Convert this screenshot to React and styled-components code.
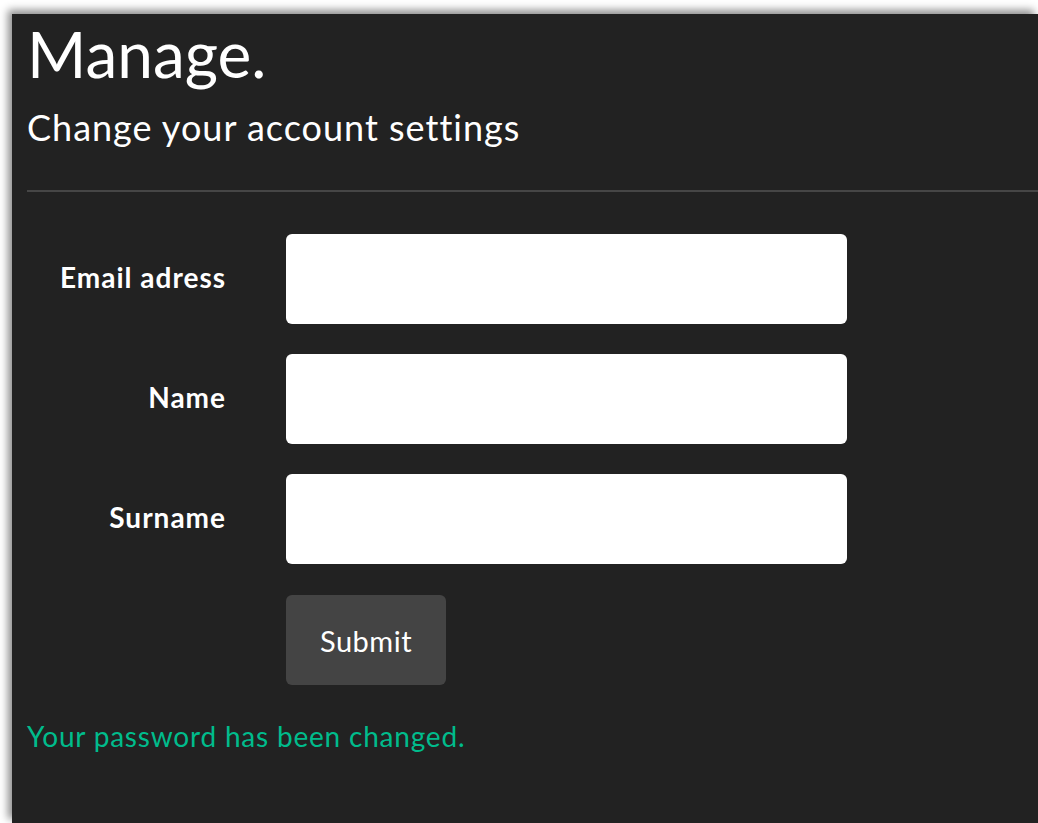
import React from "react";
import styled, { createGlobalStyle } from "styled-components";

const GlobalStyle = createGlobalStyle`
  html, body {
    margin: 0;
    padding: 0;
    background: #fff;
    overflow: hidden;
  }
  body {
    font-family: Lato, "Open Sans", sans-serif;
  }
`;

const Page = styled.div`
  padding: 14px 0 0 12px;
  height: 823px;
  box-sizing: border-box;
`;

const Panel = styled.div`
  background: #222;
  color: #fff;
  height: 100%;
  padding: 0 0 0 15px;
  box-shadow: -4px -4px 8px rgba(0, 0, 0, 0.45);
`;

const Title = styled.h1`
  margin: 0;
  padding-top: 2px;
  font-size: 64px;
  font-weight: 400;
  line-height: 76px;
`;

const Subtitle = styled.h4`
  margin: 14px 0 0;
  font-size: 36px;
  font-weight: 400;
  letter-spacing: 1px;
  line-height: 42px;
`;

const Divider = styled.hr`
  border: 0;
  border-top: 2px solid #464646;
  margin: 42px 0 0;
`;

const Form = styled.form`
  display: grid;
  grid-template-columns: 199px 561px;
  column-gap: 60px;
  row-gap: 30px;
  margin-top: 42px;
  align-items: center;
`;

const Label = styled.label`
  text-align: right;
  font-size: 28px;
  font-weight: 700;
  letter-spacing: 1px;
  padding-bottom: 5px;
`;

const Input = styled.input`
  height: 90px;
  box-sizing: border-box;
  border: 0;
  border-radius: 6px;
  background: #fff;
  font-family: inherit;
  font-size: 26px;
  padding: 0 20px;
`;

const Button = styled.button`
  grid-column: 2;
  justify-self: start;
  width: 160px;
  height: 90px;
  margin-top: 1px;
  border: 0;
  border-radius: 6px;
  background: #444;
  color: #fff;
  font-family: inherit;
  font-size: 29px;
  letter-spacing: 0.5px;
`;

const Success = styled.p`
  margin: 34px 0 0;
  color: #00bc8c;
  font-size: 28px;
  letter-spacing: 0.8px;
`;

export default function App() {
  return (
    <>
      <GlobalStyle />
      <Page>
        <Panel>
          <Title>Manage.</Title>
          <Subtitle>Change your account settings</Subtitle>
          <Divider />
          <Form onSubmit={(e) => e.preventDefault()}>
            <Label htmlFor="email">Email adress</Label>
            <Input id="email" type="email" />
            <Label htmlFor="name">Name</Label>
            <Input id="name" type="text" />
            <Label htmlFor="surname">Surname</Label>
            <Input id="surname" type="text" />
            <Button type="submit">Submit</Button>
          </Form>
          <Success>Your password has been changed.</Success>
        </Panel>
      </Page>
    </>
  );
}
